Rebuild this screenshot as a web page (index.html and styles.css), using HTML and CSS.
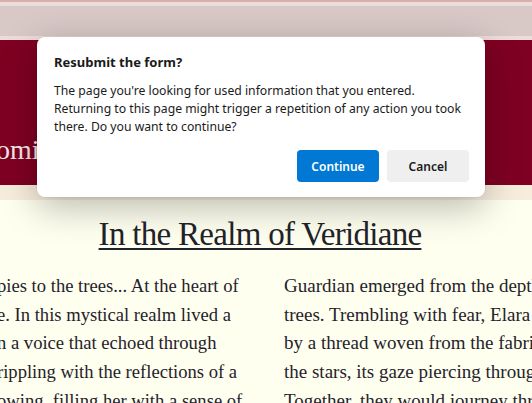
FILE: index.html
```html
<!DOCTYPE html>
<html lang="en">
<head>
<meta charset="utf-8">
<title>In the Realm of Veridiane</title>
<link rel="stylesheet" href="styles.css">
</head>
<body>
<div class="topbar">
  <div class="topbar-edge"></div>
  <div class="topbar-light"></div>
  <div class="topbar-main"></div>
  <div class="topbar-light"></div>
</div>
<header class="hero">
  <h1 class="hero-title">omi</h1>
</header>
<div class="band"></div>
<main class="story">
  <h2 class="story-title">In the Realm of Veridiane</h2>
  <div class="columns">
    <div class="col col-left">
      <span class="line">pies to the trees... At the heart of</span>
      <span class="line">e. In this mystical realm lived a</span>
      <span class="line">n a voice that echoed through</span>
      <span class="line">rippling with the reflections of a</span>
      <span class="line">owing, filling her with a sense of</span>
    </div>
    <div class="col col-right">
      <span class="line">Guardian emerged from the depths</span>
      <span class="line">trees. Trembling with fear, Elara knew</span>
      <span class="line">by a thread woven from the fabric</span>
      <span class="line">the stars, its gaze piercing through</span>
      <span class="line">Together, they would journey through</span>
    </div>
  </div>
</main>
<div class="dialog" role="dialog" aria-labelledby="dlg-title">
  <h3 class="dialog-title" id="dlg-title">Resubmit the form?</h3>
  <p class="dialog-text">The page you're looking for used information that you entered.<br>Returning to this page might trigger a repetition of any action you took<br>there. Do you want to continue?</p>
  <div class="dialog-actions">
    <button class="btn btn-primary">Continue</button>
    <button class="btn btn-secondary">Cancel</button>
  </div>
</div>
</body>
</html>
```
FILE: styles.css
```css
html, body {
  margin: 0;
  padding: 0;
}
body {
  width: 532px;
  height: 403px;
  overflow: hidden;
  background: #fffff0;
  position: relative;
}
.topbar {
  display: flex;
  flex-direction: column;
}
.topbar-edge {
  height: 2px;
  background: #d8b0ac;
}
.topbar-light {
  height: 4px;
  background: #ecdcda;
}
.topbar-main {
  height: 30px;
  background: #d8c8c6;
}
.hero {
  height: 145px;
  background: #7f0022;
  overflow: hidden;
  display: flex;
  align-items: flex-start;
}
.hero-title {
  margin: 94px 0 0 -4px;
  font-family: "Liberation Serif", serif;
  font-weight: normal;
  font-size: 28px;
  line-height: 32px;
  color: #f3e8e9;
}
.band {
  height: 15px;
  background: #f7eddc;
}
.story {
  padding-top: 14px;
  font-family: "Liberation Serif", serif;
  color: #1f232b;
}
.story-title {
  margin: 0;
  text-align: center;
  font-weight: normal;
  font-size: 33px;
  line-height: 40px;
  letter-spacing: -0.7px;
  text-decoration: underline;
  text-decoration-thickness: 2px;
  text-underline-offset: 3px;
  padding-right: 12px;
}
.columns {
  margin-top: 18px;
  display: grid;
  grid-template-columns: 243px 1fr;
  column-gap: 41px;
  font-size: 19px;
  line-height: 28.7px;
}
.col {
  overflow: hidden;
}
.line {
  display: block;
  white-space: nowrap;
}
.col-left {
  font-size: 18.6px;
}
.col-left .line {
  margin-left: -3px;
}
.dialog {
  position: absolute;
  left: 37px;
  top: 37px;
  width: 448px;
  box-sizing: border-box;
  padding: 16px 16px 15px 17px;
  background: #ffffff;
  border-radius: 8px;
  box-shadow: 0 10px 36px rgba(0, 0, 0, 0.28), 0 0 0 1px rgba(0, 0, 0, 0.04);
  font-family: "Noto Sans", sans-serif;
  color: #1a1a1a;
}
.dialog-title {
  margin: 0;
  font-size: 13px;
  line-height: 18px;
  font-weight: 700;
}
.dialog-text {
  margin: 11px 0 0 0;
  font-size: 12.2px;
  line-height: 18px;
  white-space: nowrap;
}
.dialog-actions {
  margin-top: 14px;
  display: flex;
  justify-content: flex-end;
  gap: 8px;
}
.btn {
  width: 82px;
  height: 32px;
  border: none;
  border-radius: 4px;
  font-family: "Noto Sans", sans-serif;
  font-size: 12px;
  font-weight: 600;
  cursor: pointer;
}
.btn-primary {
  background: #0078d4;
  color: #ffffff;
}
.btn-secondary {
  background: #efefef;
  color: #1a1a1a;
}
```
